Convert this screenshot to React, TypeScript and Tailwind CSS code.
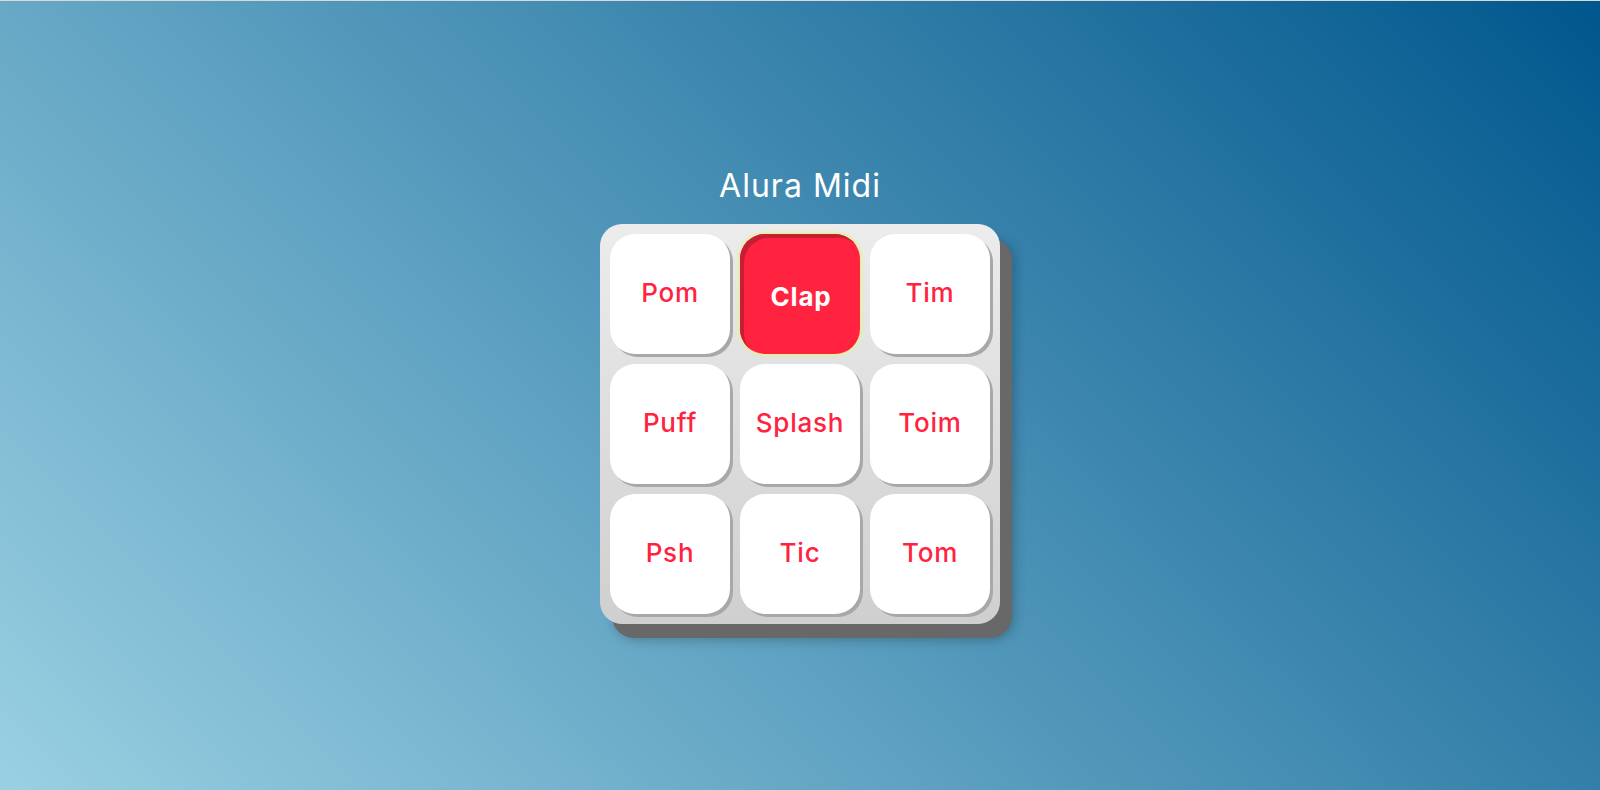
const keys = [
  { label: "Pom" },
  { label: "Clap", active: true },
  { label: "Tim" },
  { label: "Puff" },
  { label: "Splash" },
  { label: "Toim" },
  { label: "Psh" },
  { label: "Tic" },
  { label: "Tom" },
];

function Key({ label, active }: { label: string; active?: boolean }) {
  if (active) {
    return (
      <button className="flex h-[120px] w-[120px] items-center justify-center rounded-[25px] bg-[#ff2340] pt-[4px] pl-[2px] text-[26px] font-bold tracking-[0.8px] text-white shadow-[inset_4px_4px_0_#c71d35,0_0_3px_2px_#e6efa0]">
        {label}
      </button>
    );
  }
  return (
    <button className="flex h-[120px] w-[120px] items-center justify-center rounded-[25px] bg-white pb-[4px] text-[26px] font-medium tracking-[0.8px] text-[#ff2340] shadow-[3px_3px_0_#a8a8a8]">
      {label}
    </button>
  );
}

export default function App() {
  return (
    <div
      className="flex h-[790px] w-full flex-col items-center border-t border-[#d9d9d9] bg-[linear-gradient(45deg,#9ad0e2,#00578d)] pt-[163px]"
      style={{ fontFamily: "Inter, 'Open Sans', sans-serif" }}
    >
      <h1 className="mb-[16px] text-[32px] leading-[44px] font-normal tracking-[1px] text-white">Alura Midi</h1>
      <div className="grid w-[400px] grid-cols-3 gap-[10px] rounded-[22px] bg-[linear-gradient(to_bottom,#ececec,#cfcfcf)] p-[10px] shadow-[12px_14px_0_#686868,14px_16px_12px_rgba(0,0,0,0.25)]">
        {keys.map((k) => (
          <Key key={k.label} label={k.label} active={k.active} />
        ))}
      </div>
    </div>
  );
}
